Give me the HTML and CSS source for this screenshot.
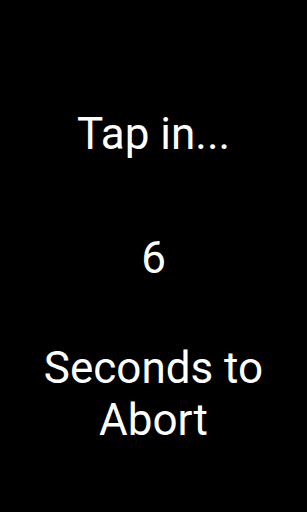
FILE: index.html
```html
<!DOCTYPE html>
<html>

<head lang="en">
    <meta charset="UTF-8">
    <title>Countdown</title>
    <link rel="stylesheet" href="styles.css">
</head>

<body>
    <div class="screen">
        <div class="label">Tap in...</div>
        <div class="count">6</div>
        <div class="label">Seconds to<br>Abort</div>
    </div>
</body>

</html>
```

FILE: styles.css
```css
html,
body {
    margin: 0;
    height: 100%;
    background: #000;
}

.screen {
    height: 512px;
    display: flex;
    flex-direction: column;
    align-items: center;
    color: #fff;
    font-family: Roboto, "Noto Sans", sans-serif;
    font-size: 44px;
    line-height: 52px;
    text-align: center;
    padding-top: 108px;
    box-sizing: border-box;
}

.count {
    margin-top: 72px;
}

.count + .label {
    margin-top: 58px;
}
```
